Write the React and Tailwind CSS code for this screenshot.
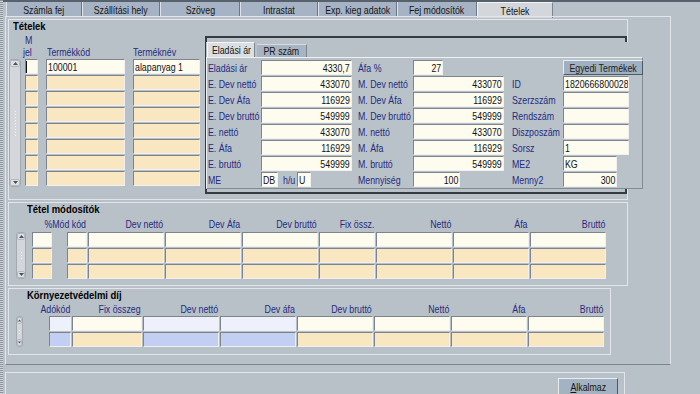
import React from "react";

const tones = {
  cream: "bg-[#fefbef]",
  tan: "bg-[#f9e7c1]",
  blue: "bg-[#c3cef3]",
  pale: "bg-[#eef0fb]",
};

const origins = { left: "origin-left", right: "origin-right", center: "origin-center" };

function T({ children, o = "left", bold }) {
  return (
    <span className={`inline-block whitespace-nowrap ${bold ? "scale-x-[0.86] font-bold" : "scale-x-[0.8]"} ${origins[o]}`}>
      {children}
    </span>
  );
}

function Cell({ w, tone = "cream", right, children, caret }) {
  return (
    <div
      className={`${w} h-[15px] shrink-0 border border-t-[#7d848c] border-l-[#7d848c] border-b-[#eef0f2] border-r-[#eef0f2] ${tones[tone]} flex items-center px-[1px] overflow-hidden whitespace-nowrap text-[#111] ${right ? "justify-end" : ""}`}
    >
      {caret && <div className="w-px h-[12px] bg-[#111] -ml-[1px]" />}
      {children !== undefined && children !== "" && <T o={right ? "right" : "left"}>{children}</T>}
    </div>
  );
}

function Label({ w, children }) {
  return (
    <div className={`${w} shrink-0 whitespace-nowrap text-[#1f2c80]`}>
      <T>{children}</T>
    </div>
  );
}

function Head({ w, children }) {
  return (
    <div className={`${w} shrink-0 flex justify-end whitespace-nowrap pr-[1px] text-[#1f2c80]`}>
      <T o="right">{children}</T>
    </div>
  );
}

function Arrow({ up }) {
  return (
    <div className="w-full h-[7px] flex items-center justify-center rounded-[2px] border border-[#b3b9c0] bg-[#dde0e4]">
      <svg width="5" height="3" viewBox="0 0 5 3">
        {up ? <polygon points="0,3 5,3 2.5,0" fill="#4a4f55" /> : <polygon points="0,0 5,0 2.5,3" fill="#4a4f55" />}
      </svg>
    </div>
  );
}

function Scroll({ cls, dots = 5 }) {
  return (
    <div className={`${cls} shrink-0 rounded-[3px] border border-[#a3a9b0] bg-[#d3d7db] flex flex-col items-center justify-between`}>
      <Arrow up />
      <div className="flex flex-col gap-[2px] items-center">
        {Array.from({ length: dots }).map((_, i) => (
          <div key={i} className="w-px h-px bg-[#f5f6f7]" />
        ))}
      </div>
      <Arrow />
    </div>
  );
}

const topTabs = [
  ["Számla fej", "w-[76px]"],
  ["Szállítási hely", "w-[78px]"],
  ["Szöveg", "w-[80px]"],
  ["Intrastat", "w-[78px]"],
  ["Exp. kieg adatok", "w-[79px]"],
  ["Fej módosítók", "w-[80px]"],
];

function Tabs() {
  return (
    <div className="h-[15px] pl-[3px] flex shrink-0">
      {topTabs.map(([t, w]) => (
        <div
          key={t}
          className={`${w} h-[15px] flex items-center justify-center whitespace-nowrap border-l border-r border-l-[#dde2e7] border-r-[#6c7784] bg-[#a5b3c4] text-[#151515]`}
        >
          <T o="center">{t}</T>
        </div>
      ))}
      <div className="w-[76px] h-[16px] flex items-center justify-center border-l border-t border-r border-l-[#f2f4f6] border-t-[#f2f4f6] border-r-[#7c8691] bg-[#d3d6da] text-[#151515]">
        <T o="center">Tételek</T>
      </div>
    </div>
  );
}

const panelRows = [
  ["E. Dev nettó", "433070", "M. Dev nettó", "433070", "ID", "1820666800028"],
  ["E. Dev Áfa", "116929", "M. Dev Áfa", "116929", "Szerzszám", ""],
  ["E. Dev bruttó", "549999", "M. Dev bruttó", "549999", "Rendszám", ""],
  ["E. nettó", "433070", "M. nettó", "433070", "Diszposzám", ""],
  ["E. Áfa", "116929", "M. Áfa", "116929", "Sorsz", "1"],
];

function TabPanel() {
  return (
    <div className="-ml-[1px] mt-[4px] flex flex-col w-[437px] shrink-0">
      <div className="h-[15px] flex items-end pl-px bg-[#b8c0c8]">
        <div className="w-[48px] h-[15px] flex items-center justify-center border-t border-l border-r border-t-[#f4f6f8] border-l-[#f4f6f8] border-r-[#7d8690] bg-[#dcdfe2] text-[#151515]">
          <T o="center">Eladási ár</T>
        </div>
        <div className="ml-[2px] w-[50px] h-[13px] flex items-center justify-center border-t border-r border-t-[#d6dce2] border-r-[#7d8690] bg-[#a7b4c2] text-[#151515]">
          <T o="center">PR szám</T>
        </div>
      </div>
      <div className="w-[437px] h-[132px] bg-[#b9c1c9] border border-t-[#eef1f3] border-l-[#eef1f3] border-r-[#838c95] border-b-[#838c95] pt-[2px] pl-[1px] flex flex-col gap-[1px]">
        <div className="h-[15px] flex items-center">
          <Label w="w-[53px]">Eladási ár</Label>
          <Cell w="w-[91px]" right>4330,7</Cell>
          <div className="w-[6px] shrink-0" />
          <Label w="w-[55px]">Áfa %</Label>
          <Cell w="w-[30px]" right>27</Cell>
          <div className="w-[120px] shrink-0" />
          <div className="w-[80px] h-[15px] shrink-0 flex items-center justify-center border border-t-[#e9edf0] border-l-[#e9edf0] border-b-[#4f5a64] border-r-[#4f5a64] bg-[#9eb0c1] text-[#1c1c1c] whitespace-nowrap">
            <T o="center">Egyedi Termékek</T>
          </div>
        </div>
        {panelRows.map((r) => (
          <div key={r[0]} className="h-[15px] flex items-center">
            <Label w="w-[53px]">{r[0]}</Label>
            <Cell w="w-[91px]" right>{r[1]}</Cell>
            <div className="w-[6px] shrink-0" />
            <Label w="w-[55px]">{r[2]}</Label>
            <Cell w="w-[91px]" right>{r[3]}</Cell>
            <div className="w-[8px] shrink-0" />
            <Label w="w-[51px]">{r[4]}</Label>
            <Cell w="w-[66px]">{r[5]}</Cell>
          </div>
        ))}
        <div className="h-[15px] flex items-center">
          <Label w="w-[53px]">E. bruttó</Label>
          <Cell w="w-[91px]" right>549999</Cell>
          <div className="w-[6px] shrink-0" />
          <Label w="w-[55px]">M. bruttó</Label>
          <Cell w="w-[91px]" right>549999</Cell>
          <div className="w-[8px] shrink-0" />
          <Label w="w-[51px]">ME2</Label>
          <Cell w="w-[54px]">KG</Cell>
        </div>
        <div className="h-[15px] flex items-center">
          <Label w="w-[53px]">ME</Label>
          <Cell w="w-[17px]">DB</Cell>
          <div className="w-[5px] shrink-0" />
          <Label w="w-[14px]">h/u</Label>
          <Cell w="w-[14px]">U</Cell>
          <div className="w-[47px] shrink-0" />
          <Label w="w-[55px]">Mennyiség</Label>
          <Cell w="w-[47px]" right>100</Cell>
          <div className="w-[52px] shrink-0" />
          <Label w="w-[51px]">Menny2</Label>
          <Cell w="w-[54px]" right>300</Cell>
        </div>
      </div>
    </div>
  );
}

function TetelekGroup() {
  return (
    <div className="ml-[2px] mt-[2px] w-[620px] h-[181px] shrink-0 border border-[#e2e6ea] flex flex-col">
      <div className="h-[12px] pl-[4px] text-black">
        <T bold>Tételek</T>
      </div>
      <div className="flex items-start">
        <div className="w-[191px] shrink-0 flex flex-col pt-[2px]">
          <div className="h-[12px] pl-[16px] text-[#1f2c80]">
            <T>M</T>
          </div>
          <div className="h-[12px] flex text-[#1f2c80]">
            <div className="w-[37px] pl-[14px] shrink-0">
              <T>jel</T>
            </div>
            <div className="w-[86px] pl-[1px] shrink-0">
              <T>Termékkód</T>
            </div>
            <div className="pl-[1px]">
              <T>Terméknév</T>
            </div>
          </div>
          <div className="mt-[1px] flex items-start">
            <Scroll cls="w-[12px] h-[128px]" dots={9} />
            <div className="ml-[4px] flex flex-col gap-[1px]">
              {Array.from({ length: 8 }).map((_, i) => (
                <div key={i} className="flex">
                  <Cell w="w-[13px]" tone={i === 0 ? "cream" : "tan"} caret={i === 0} />
                  <div className="w-[8px] shrink-0" />
                  <Cell w="w-[79px]" tone={i === 0 ? "cream" : "tan"}>{i === 0 ? "100001" : ""}</Cell>
                  <div className="w-[8px] shrink-0" />
                  <Cell w="w-[67px]" tone={i === 0 ? "cream" : "tan"}>{i === 0 ? "alapanyag 1" : ""}</Cell>
                </div>
              ))}
            </div>
          </div>
        </div>
        <div className="ml-[5px] mt-[4px] w-[422px] h-[158px] shrink-0 border-2 border-[#353b41]">
          <TabPanel />
        </div>
      </div>
    </div>
  );
}

const modW = ["w-[20px]", "w-[76px]", "w-[76px]", "w-[76px]", "w-[56px]", "w-[76px]", "w-[76px]", "w-[76px]"];

function ModGroup() {
  return (
    <div className="ml-[2px] mt-[2px] w-[620px] h-[84px] shrink-0 border border-[#e2e6ea] flex flex-col">
      <div className="h-[12px] pl-[18px] text-black">
        <T bold>Tétel módosítók</T>
      </div>
      <div className="mt-[3px] h-[12px] flex pl-[23px] gap-[1px]">
        <Head w="w-[55px]">%Mód kód</Head>
        <Head w="w-[76px]">Dev nettó</Head>
        <Head w="w-[76px]">Dev Áfa</Head>
        <Head w="w-[76px]">Dev bruttó</Head>
        <Head w="w-[56px]">Fix össz.</Head>
        <Head w="w-[76px]">Nettó</Head>
        <Head w="w-[76px]">Áfa</Head>
        <Head w="w-[76px]">Bruttó</Head>
      </div>
      <div className="mt-[2px] flex items-start">
        <div className="w-[7px] shrink-0" />
        <Scroll cls="w-[10px] h-[47px]" dots={3} />
        <div className="ml-[6px] flex flex-col gap-[1px]">
          {[0, 1, 2].map((i) => (
            <div key={i} className="flex">
              <Cell w="w-[20px]" tone={i === 0 ? "cream" : "tan"} />
              <div className="ml-[15px] flex gap-[1px]">
                {modW.map((w, j) => (
                  <Cell key={j} w={w} tone={i === 0 ? "cream" : "tan"} />
                ))}
              </div>
            </div>
          ))}
        </div>
      </div>
    </div>
  );
}

const kornW = ["w-[22px]", "w-[70px]", "w-[76px]", "w-[76px]", "w-[76px]", "w-[76px]", "w-[76px]", "w-[76px]"];
const kornT0 = ["pale", "cream", "pale", "pale", "cream", "cream", "cream", "cream"];
const kornT1 = ["blue", "tan", "blue", "blue", "tan", "tan", "tan", "tan"];

function KornGroup() {
  return (
    <div className="ml-[2px] mt-[2px] w-[603px] h-[67px] shrink-0 border border-[#e2e6ea] flex flex-col">
      <div className="h-[12px] pl-[18px] text-black">
        <T bold>Környezetvédelmi díj</T>
      </div>
      <div className="mt-[2px] h-[12px] flex pl-[40px] gap-[1px]">
        <Head w="w-[22px]">Adókód</Head>
        <Head w="w-[70px]">Fix összeg</Head>
        <Head w="w-[76px]">Dev nettó</Head>
        <Head w="w-[76px]">Dev áfa</Head>
        <Head w="w-[76px]">Dev bruttó</Head>
        <Head w="w-[76px]">Nettó</Head>
        <Head w="w-[76px]">Áfa</Head>
        <Head w="w-[76px]">Bruttó</Head>
      </div>
      <div className="mt-[1px] flex items-start">
        <div className="w-[7px] shrink-0" />
        <Scroll cls="w-[7px] h-[31px]" dots={2} />
        <div className="ml-[26px] flex flex-col gap-[1px]">
          {[kornT0, kornT1].map((t, i) => (
            <div key={i} className="flex gap-[1px]">
              {kornW.map((w, j) => (
                <Cell key={j} w={w} tone={t[j]} />
              ))}
            </div>
          ))}
        </div>
      </div>
    </div>
  );
}

export default function App() {
  return (
    <div className="w-[700px] h-[394px] overflow-hidden bg-[#b8c0c8] flex font-['Liberation_Sans',Arial,sans-serif] text-[11px] leading-[12px] text-[#141414]">
      <div className="w-[3px] h-full shrink-0 bg-[repeating-linear-gradient(180deg,#8b939b_0px,#8b939b_1px,#cdd3d9_1px,#cdd3d9_2px)]" />
      <div className="flex-1 flex flex-col">
        <div className="h-[2px] bg-[#57616b] shrink-0" />
        <Tabs />
        <div className="pl-[2px] shrink-0 -mt-px">
          <div className="w-[666px] h-[349px] border border-t-[#e2e6ea] border-l-[#e2e6ea] border-r-[#e2e6ea] border-b-[#7c848c] flex flex-col">
            <TetelekGroup />
            <ModGroup />
            <KornGroup />
          </div>
        </div>
        <div className="ml-[2px] mt-[7px] w-[620px] h-[24px] shrink-0 border-t border-l border-r border-[#e2e6ea] flex justify-end pr-[6px] pt-[5px]">
          <div className="w-[60px] h-[18px] flex items-center justify-center border border-t-[#e9edf0] border-l-[#e9edf0] border-b-[#4f5a64] border-r-[#4f5a64] bg-[#a3b3c4] text-[#151515]">
            <T o="center">
              <span className="underline">A</span>lkalmaz
            </T>
          </div>
        </div>
      </div>
    </div>
  );
}
